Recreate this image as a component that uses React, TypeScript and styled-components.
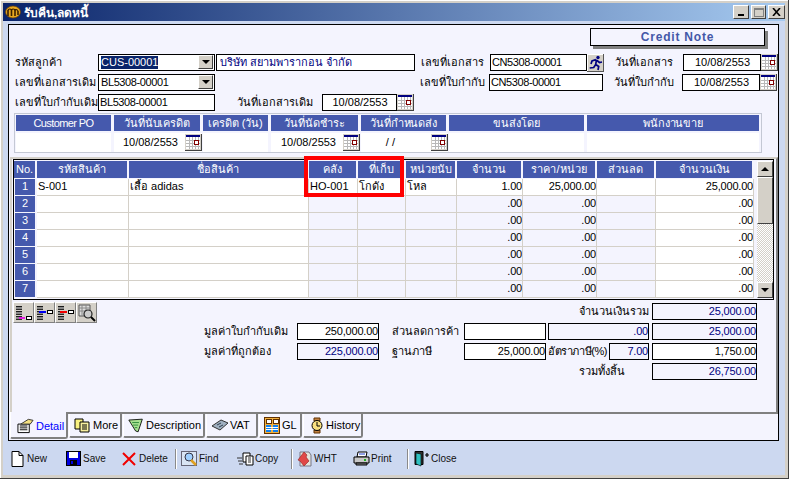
import React from "react";
import styled, { createGlobalStyle } from "styled-components";

const GlobalStyle = createGlobalStyle`
  html, body { margin: 0; padding: 0; background: #d4d0c8; }
  body { font-family: "Liberation Sans", "Noto Sans", sans-serif; font-size: 11px; color: #000; }
  * { box-sizing: border-box; }
`;

const Frame = styled.div`
  width: 789px;
  height: 479px;
  padding: 3px 3px 3px;
  background: #d4d0c8;
  border-right: 1px solid #404040;
  border-bottom: 1px solid #404040;
  box-shadow: inset 1px 1px 0 #fff;
  display: flex;
  flex-direction: column;
  overflow: hidden;
`;

const TitleBar = styled.div`
  height: 18px;
  flex: none;
  padding: 0 0 0 2px;
  display: flex;
  align-items: center;
  gap: 3px;
  color: #fff;
  font-weight: bold;
  font-size: 12px;
  background: linear-gradient(to right, #0a246a, #a6caf0);
`;

const TitleText = styled.span`
  flex: 1;
`;

const WinButton = styled.div<{ $w: number; $disabled?: boolean }>`
  width: ${(p) => p.$w}px;
  height: 14px;
  margin-left: -1px;
  flex: none;
  background: #d4d0c8;
  border: 1px solid;
  border-color: #fff #404040 #404040 #fff;
  display: flex;
  align-items: center;
  justify-content: center;
`;

const Client = styled.div`
  flex: 1;
  background: #ccd8f0;
  display: flex;
  flex-direction: column;
  padding: 3px 6px 0 5px;
  min-height: 0;
`;

const Panel = styled.div`
  height: 417px;
  flex: none;
  border: 1px solid #000;
  background: #f4f4fe;
  display: flex;
  flex-direction: column;
`;

const BadgeRow = styled.div`
  height: 29px;
  padding: 3px 13px 0 0;
  display: flex;
  justify-content: flex-end;
`;

const Badge = styled.div`
  width: 175px;
  height: 18px;
  background: #f4f4fe;
  border: 1px solid #000;
  box-shadow: 3px 3px 0 #808080;
  color: #4358a8;
  font-weight: bold;
  font-size: 12px;
  letter-spacing: 0.8px;
  text-align: center;
  line-height: 16px;
`;

const FormRow = styled.div`
  height: 17px;
  margin-bottom: 3px;
  padding-left: 6px;
  display: flex;
  align-items: stretch;
`;

const Label = styled.span<{ $w: number; $ml?: number; $tight?: boolean }>`
  width: ${(p) => p.$w}px;
  margin-left: ${(p) => p.$ml ?? 0}px;
  flex: none;
  line-height: 17px;
  white-space: nowrap;
  font-size: 11px;
  letter-spacing: ${(p) => (p.$tight ? "-0.4px" : "0")};
`;

const Box = styled.div<{
  $w: number;
  $ml?: number;
  $pl?: number;
  $right?: boolean;
  $center?: boolean;
  $tint?: boolean;
  $navy?: boolean;
  $tight?: boolean;
}>`
  width: ${(p) => p.$w}px;
  margin-left: ${(p) => p.$ml ?? 0}px;
  flex: none;
  height: 17px;
  border: 1px solid #000;
  background: ${(p) => (p.$tint ? "#f4f4fe" : "#fff")};
  color: ${(p) => (p.$navy ? "#000080" : "#000")};
  text-align: ${(p) => (p.$right ? "right" : p.$center ? "center" : "left")};
  letter-spacing: ${(p) => (p.$tight ? "-0.4px" : p.$right ? "-0.2px" : "0")};
  line-height: 15px;
  padding: 0 0 0 ${(p) => p.$pl ?? 1}px;
  white-space: nowrap;
  overflow: hidden;
`;

const Combo = styled(Box)`
  display: flex;
  justify-content: space-between;
  padding: 0 1px 0 2px;
`;

const Selected = styled.span`
  background: #0a246a;
  color: #fff;
  height: 13px;
  line-height: 13px;
  margin-top: 1px;
`;

const ComboArrow = styled.div`
  width: 15px;
  height: 14px;
  background: #d4d0c8;
  border: 1px solid;
  border-color: #fff #404040 #404040 #fff;
  display: flex;
  align-items: center;
  justify-content: center;
  &::after {
    content: "";
    border-left: 4px solid transparent;
    border-right: 4px solid transparent;
    border-top: 4px solid #000;
  }
`;

const CalWrap = styled.div`
  width: 17px;
  height: 17px;
  flex: none;
  display: flex;
`;

const Terms = styled.div`
  width: 748px;
  margin-left: 5px;
  margin-top: -1px;
  flex: none;
  border: 1px solid #c4c8d4;
  display: grid;
  grid-template-columns: 98px 89px 68px 90px 88px 138px 175px;
  grid-template-rows: 19px 19px;
`;

const TermHead = styled.div<{ $tight?: boolean }>`
  background: #4559ad;
  color: #fff;
  text-align: center;
  line-height: 16px;
  letter-spacing: ${(p) => (p.$tight ? "-0.6px" : "-0.1px")};
  margin: 1px 2px 2px 1px;
  white-space: nowrap;
  overflow: hidden;
`;

const TermCell = styled.div<{ $gap?: number; $cal?: boolean }>`
  background: #fff;
  border-right: ${(p) => (p.$cal ? "none" : "2px solid #f4f4fe")};
  display: flex;
  align-items: center;
  justify-content: flex-end;
  gap: ${(p) => p.$gap ?? 7}px;
  margin-left: 1px;
  line-height: 15px;
`;

const TabPage = styled.div`
  margin: 4px 0 0 1px;
  width: 768px;
  height: 257px;
  flex: none;
  border-top: 2px solid #d4d0c8;
  border-left: 2px solid #d4d0c8;
  border-right: 2px solid #808080;
  border-bottom: 2px solid #808080;
  position: relative;
  display: flex;
  flex-direction: column;
`;

const Sheet = styled.div`
  margin-left: 1px;
  width: 761px;
  height: 141px;
  flex: none;
  border: 1px solid #000;
  padding-top: 1px;
  display: flex;
`;

const Table = styled.div`
  width: 740px;
  flex: none;
  display: grid;
  grid-template-columns: 23px 92px 180px 49px 48px 51px 66px 74px 59px 98px;
  grid-template-rows: 18px repeat(7, 17px);
`;

const HeadCell = styled.div`
  background: #4559ad;
  color: #fff;
  text-align: center;
  line-height: 16px;
  margin: 0 2px 1px 0;
  white-space: nowrap;
  overflow: hidden;
`;

const NoCell = styled.div`
  background: #4559ad;
  color: #fff;
  text-align: center;
  line-height: 15px;
  margin: 0 2px 1px 1px;
`;

const Cell = styled.div<{ $white?: boolean; $right?: boolean }>`
  background: ${(p) => (p.$white ? "#fff" : "#f4f4fe")};
  border-right: 1px solid #d4d0c8;
  border-bottom: 1px solid #d4d0c8;
  text-align: ${(p) => (p.$right ? "right" : "left")};
  letter-spacing: ${(p) => (p.$right ? "-0.2px" : "0")};
  line-height: 15px;
  padding: 0 0 0 1px;
  white-space: nowrap;
  overflow: hidden;
`;

const Scroll = styled.div`
  width: 16px;
  margin-left: 3px;
  height: 137px;
  display: flex;
  flex-direction: column;
  background: repeating-conic-gradient(#d4d0c8 0 25%, #fff 0 50%) 0 0 / 2px 2px;
`;

const ScrollBtn = styled.div<{ $thumb?: boolean; $down?: boolean }>`
  height: ${(p) => (p.$thumb ? 47 : 16)}px;
  margin-top: ${(p) => (p.$down ? "auto" : 0)};
  background: #d4d0c8;
  border: 1px solid;
  border-color: #fff #404040 #404040 #fff;
  display: flex;
  align-items: center;
  justify-content: center;
`;

const Arrow = styled.span<{ $down?: boolean }>`
  border-left: 4px solid transparent;
  border-right: 4px solid transparent;
  border-${(p) => (p.$down ? "top" : "bottom")}: 4px solid #000;
`;

const LowerArea = styled.div`
  display: flex;
  margin-top: 2px;
  margin-left: 1px;
`;

const Tools = styled.div`
  display: flex;
  height: 21px;
`;

const ToolBtn = styled.div`
  width: 21px;
  height: 21px;
  background: #d4d0c8;
  border: 1px solid;
  border-color: #fff #808080 #808080 #fff;
  display: flex;
  align-items: center;
  justify-content: center;
`;

const Summary = styled.div`
  margin-left: 107px;
  margin-top: 1px;
  width: 553px;
  display: flex;
  flex-direction: column;
  gap: 3px;
`;

const SumRow = styled.div`
  display: flex;
  justify-content: flex-end;
  height: 17px;
`;

const TabStrip = styled.div`
  height: 26px;
  margin-left: 1px;
  display: flex;
  align-items: flex-start;
  gap: 1px;
`;

const Tab = styled.div<{ $w: number; $active?: boolean }>`
  width: ${(p) => p.$w}px;
  height: ${(p) => (p.$active ? 27 : 24)}px;
  margin-top: ${(p) => (p.$active ? -2 : 0)}px;
  position: relative;
  background: #f4f4fe;
  border-left: 1px solid #fff;
  border-right: 2px solid #808080;
  border-bottom: 2px solid #808080;
  border-bottom-left-radius: 2px;
  border-bottom-right-radius: 3px;
  color: ${(p) => (p.$active ? "#0000ff" : "#000")};
  font-size: 11px;
  display: flex;
  align-items: center;
  padding-left: 4px;
  padding-top: ${(p) => (p.$active ? 2 : 0)}px;
  white-space: nowrap;
`;

const IconSlot = styled.span<{ $w: number }>`
  width: ${(p) => p.$w}px;
  flex: none;
  display: flex;
  align-items: center;
`;

const ToolBar = styled.div`
  height: 35px;
  padding: 1px 0 0 3px;
  display: flex;
  align-items: center;
`;

const BarItem = styled.div<{ $w: number }>`
  width: ${(p) => p.$w}px;
  flex: none;
  display: flex;
  align-items: center;
  font-size: 10px;
  color: #111;
`;

const Sep = styled.div<{ $after: number }>`
  width: 2px;
  height: 20px;
  flex: none;
  margin-right: ${(p) => p.$after}px;
  background: #8a8a8a;
  border-right: 1px solid #fff;
`;

const RedMark = styled.div`
  position: absolute;
  left: 292px;
  top: -3px;
  width: 100px;
  height: 41px;
  border: 4px solid #f00;
  pointer-events: none;
`;

const Cal = () => (
  <CalWrap>
    <svg width="17" height="17" viewBox="0 0 17 17" shapeRendering="crispEdges">
      <rect width="17" height="17" fill="#d4d0c8" />
      <rect x="1" y="1" width="14" height="14" fill="#fff" />
      <rect x="1" y="1" width="14" height="2" fill="#000080" />
      <path d="M1 6h14M1 9h14M1 12h14M4 3v12M7 3v12M10 3v12M13 3v12" stroke="#b8b8b8" strokeWidth="1" />
      <rect x="9" y="6" width="4" height="4" fill="#fff" stroke="#800000" />
      <path d="M0 16.5h17M16.5 0v17" stroke="#404040" />
    </svg>
  </CalWrap>
);

const Runner = () => (
  <CalWrap>
    <svg width="17" height="18" viewBox="0 0 17 18">
      <rect width="17" height="18" fill="#d4d0c8" />
      <path d="M0 .5h17M.5 0v18" stroke="#fff" />
      <path d="M0 17.5h17M16.5 0v18" stroke="#555" />
      <circle cx="11" cy="3.5" r="1.7" fill="#000080" />
      <path d="M9 5.5l-4 1.5-1 3M9.5 5.5l-.8 5 3 2-.7 3.5M8.7 10.5l-2 3-4 .5M10 6.5l2.5 2 2.5-.5" stroke="#000080" strokeWidth="1.7" fill="none" />
    </svg>
  </CalWrap>
);

const TitleIcon = () => (
  <svg width="16" height="14" viewBox="0 0 16 14">
    <ellipse cx="8" cy="7" rx="7.5" ry="6" fill="#e8a820" stroke="#704000" strokeWidth=".7" />
    <path d="M3 11V5M6.500 11V4M10 11V4M13 10V6" stroke="#3a2000" strokeWidth="1.6" />
    <path d="M3 5Q5 3 6.500 5Q8 3 10 5Q12 4 13 6" fill="none" stroke="#3a2000" strokeWidth="1.2" />
  </svg>
);

const GridTool = ({ color, mode }: { color: string; mode: number }) => (
  <svg width="17" height="17" viewBox="0 0 17 17" shapeRendering="crispEdges">
    <path d="M1 2h6v3H1zM1 7h6v3H1zM1 12h6v3H1z" fill="#888" />
    <path d="M1 2h6M1 5h6M1 7h6M1 10h6M1 12h6M1 15h6" stroke="#000" strokeWidth=".8" />
    {mode === 0 ? (
      <path d="M11 12h5v3h-5z" fill="#fff" stroke="#000" />
    ) : (
      <path d="M11 6h5v3h-5z" fill="#fff" stroke="#000" />
    )}
    <path d={mode === 0 ? "M4 14h6" : "M3 8h7"} stroke={color} strokeWidth="1.5" />
  </svg>
);

const FindTool = () => (
  <svg width="18" height="18" viewBox="0 0 18 18">
    <path d="M1 1h11v11H1z" fill="#ddd" stroke="#555" />
    <path d="M1 4h11M1 7h11M4 1v11M8 1v11" stroke="#888" />
    <circle cx="10" cy="10" r="4" fill="#ccc" stroke="#222" strokeWidth="1.2" />
    <path d="M13 13l4 4" stroke="#000" strokeWidth="2" />
  </svg>
);

const TabIcon = ({ kind }: { kind: string }) => {
  if (kind === "Detail")
    return (
      <svg width="17" height="17" viewBox="0 0 18 17" style={{ marginLeft: 2 }}>
        <path d="M1 7h12v9H1z" fill="#fff" stroke="#000" />
        <path d="M3 9h8M3 11h8M3 13h8" stroke="#000" />
        <path d="M4 7l8-5 5 1-3 4z" fill="#f4e080" stroke="#333" />
      </svg>
    );
  if (kind === "More")
    return (
      <svg width="16" height="15" viewBox="0 0 16 15">
        <path d="M1 1h8v10H1z" fill="#f8f080" stroke="#000" />
        <path d="M6 4h9v10H6z" fill="#f8f0a0" stroke="#000" />
        <path d="M8 7h5M8 9h5M8 11h5" stroke="#000" />
      </svg>
    );
  if (kind === "Description")
    return (
      <svg width="16" height="15" viewBox="0 0 19 17">
        <path d="M1 2l16-1-5 15-3-1z" fill="#a8e090" stroke="#000" />
        <path d="M5 5h8M6 8h6M8 11h3" stroke="#208030" />
      </svg>
    );
  if (kind === "VAT")
    return (
      <svg width="18" height="14" viewBox="0 0 18 14">
        <path d="M1 8l9-6 7 3-8 7z" fill="#a0b0c0" stroke="#333" />
        <path d="M6 7l4-2M8 9l4-2" stroke="#304050" />
      </svg>
    );
  if (kind === "GL")
    return (
      <svg width="16" height="17" viewBox="0 0 16 17" shapeRendering="crispEdges">
        <rect x=".5" y=".5" width="15" height="16" fill="#f0b040" stroke="#603000" />
        <path d="M2 2h5v4H2zM9 2h5v4H9z" fill="#fff" stroke="#603000" />
        <path d="M2 8h5v7H2zM9 8h5v7H9z" fill="#1080f0" />
        <path d="M2 10.500h12M2 12.500h12" stroke="#fff" />
      </svg>
    );
  return (
    <svg width="14" height="17" viewBox="0 0 14 17" style={{ marginLeft: 2 }}>
      <path d="M4 1h6v3H4zM4 13h6v3H4z" fill="#c08040" stroke="#603000" />
      <circle cx="7" cy="8.500" r="5" fill="#f8e080" stroke="#000" />
      <path d="M7 5v4h3" stroke="#000" fill="none" />
    </svg>
  );
};

const BarIcon = ({ kind }: { kind: string }) => {
  switch (kind) {
    case "New":
      return (
        <svg width="13" height="16" viewBox="0 0 13 16">
          <path d="M1 .5h7l4 4v11H1z" fill="#fff" stroke="#000" />
          <path d="M8 .5v4h4" fill="none" stroke="#000" />
        </svg>
      );
    case "Save":
      return (
        <svg width="15" height="15" viewBox="0 0 15 15" shapeRendering="crispEdges">
          <rect width="15" height="15" fill="#000" />
          <rect x="1" y="1" width="13" height="13" fill="#0000e0" />
          <rect x="3" y="1" width="9" height="6" fill="#fff" />
          <rect x="4" y="9" width="7" height="5" fill="#000" />
          <rect x="5" y="10" width="2" height="3" fill="#0000e0" />
        </svg>
      );
    case "Delete":
      return (
        <svg width="14" height="14" viewBox="0 0 14 14">
          <path d="M1 1l12 12M13 1L1 13" stroke="#f00000" strokeWidth="2" />
        </svg>
      );
    case "Find":
      return (
        <svg width="17" height="16" viewBox="0 0 17 16">
          <rect x=".5" y=".5" width="15" height="14" fill="#d8e4f4" stroke="#667" />
          <circle cx="8" cy="6" r="4" fill="#a0d0ff" stroke="#334" />
          <path d="M10 9l5 5" stroke="#e0a020" strokeWidth="2.5" />
        </svg>
      );
    case "Copy":
      return (
        <svg width="17" height="14" viewBox="0 0 17 14">
          <path d="M6 1h7v9H6z" fill="#fff" stroke="#000" />
          <path d="M9 4h7v9H9z" fill="#fff" stroke="#000" />
          <path d="M11 6h3M11 8h3M11 10h3M0 6h5M1 9h4M2 12h4" stroke="#333" />
        </svg>
      );
    case "WHT":
      return (
        <svg width="15" height="17" viewBox="0 0 15 17">
          <path d="M3 2h9l2 3v11H3z" fill="#e4e4dc" stroke="#778" />
          <path d="M1 10l6-8 3 3-1 2 3 4-5 5-4-5z" fill="#e04848" stroke="#902020" strokeWidth=".6" />
        </svg>
      );
    case "Print":
      return (
        <svg width="17" height="15" viewBox="0 0 17 15">
          <path d="M5 1h9l-1 5H4z" fill="#fff" stroke="#000" />
          <path d="M6 3h6" stroke="#2040d0" />
          <path d="M1 6h15v6H1z" fill="#c8c8c8" stroke="#000" />
          <path d="M3 12h11v2H3z" fill="#888" stroke="#000" />
          <rect x="11" y="8" width="2" height="2" fill="#20b020" />
        </svg>
      );
    default:
      return (
        <svg width="16" height="16" viewBox="0 0 16 16">
          <path d="M1 .5h8v13H1z" fill="#303030" stroke="#000" />
          <path d="M2 2l5 1v12l-5-2z" fill="#30c0c0" stroke="#000" strokeWidth=".6" />
          <path d="M11 4h4M13 2v4" stroke="#000" strokeWidth="1.2" />
        </svg>
      );
  }
};

const heads = ["No.", "รหัสสินค้า", "ชื่อสินค้า", "คลัง", "ที่เก็บ", "หน่วยนับ", "จำนวน", "ราคา/หน่วย", "ส่วนลด", "จำนวนเงิน"];
const rowNos = [1, 2, 3, 4, 5, 6, 7];

const tabs = [
  { name: "Detail", w: 58, slot: 21 },
  { name: "More", w: 53, slot: 19 },
  { name: "Description", w: 82, slot: 18 },
  { name: "VAT", w: 52, slot: 19 },
  { name: "GL", w: 43, slot: 18 },
  { name: "History", w: 60, slot: 18 },
];

export default function App() {
  return (
    <>
      <GlobalStyle />
      <Frame>
        <TitleBar>
          <TitleIcon />
          <TitleText>รับคืน,ลดหนี้</TitleText>
          <WinButton $w={16}>
            <svg width="8" height="8" viewBox="0 0 8 8" shapeRendering="crispEdges">
              <rect x="1" y="6" width="6" height="2" fill="#000" />
            </svg>
          </WinButton>
          <WinButton $w={15} $disabled>
            <svg width="10" height="9" viewBox="0 0 10 9" shapeRendering="crispEdges">
              <path d="M.5.500h9v8h-9z M0 1.500h10" fill="none" stroke="#808080" />
            </svg>
          </WinButton>
          <WinButton $w={17}>
            <svg width="9" height="8" viewBox="0 0 9 8">
              <path d="M1 0l7 8M8 0L1 8" stroke="#000" strokeWidth="1.6" />
            </svg>
          </WinButton>
        </TitleBar>
        <Client>
          <Panel>
            <BadgeRow>
              <Badge>Credit Note</Badge>
            </BadgeRow>
            <FormRow>
              <Label $w={83}>รหัสลูกค้า</Label>
              <Combo $w={117}>
                <Selected>CUS-00001</Selected>
                <ComboArrow />
              </Combo>
              <Box $w={199} $ml={1} $pl={3} $navy>บริษัท สยามพารากอน จำกัด</Box>
              <Label $w={69} $ml={6}>เลขที่เอกสาร</Label>
              <Box $w={97} $tight>CN5308-00001</Box>
              <Runner />
              <Label $w={68} $ml={11}>วันที่เอกสาร</Label>
              <Box $w={78} $center>10/08/2553</Box>
              <Cal />
            </FormRow>
            <FormRow>
              <Label $w={83}>เลขที่เอกสารเดิม</Label>
              <Combo $w={117} $tight>
                <span>BL5308-00001</span>
                <ComboArrow />
              </Combo>
              <Label $w={69} $ml={205}>เลขที่ใบกำกับ</Label>
              <Box $w={114} $tight>CN5308-00001</Box>
              <Label $w={68} $ml={11}>วันที่ใบกำกับ</Label>
              <Box $w={78} $center>10/08/2553</Box>
              <Cal />
            </FormRow>
            <FormRow>
              <Label $w={83}>เลขที่ใบกำกับเดิม</Label>
              <Box $w={117} $tight>BL5308-00001</Box>
              <Label $w={85} $ml={22}>วันที่เอกสารเดิม</Label>
              <Box $w={75} $center>10/08/2553</Box>
              <Cal />
            </FormRow>
            <Terms>
              <TermHead $tight>Customer PO</TermHead>
              <TermHead>วันที่นับเครดิต</TermHead>
              <TermHead>เครดิต (วัน)</TermHead>
              <TermHead>วันที่นัดชำระ</TermHead>
              <TermHead>วันที่กำหนดส่ง</TermHead>
              <TermHead>ขนส่งโดย</TermHead>
              <TermHead>พนักงานขาย</TermHead>
              <TermCell />
              <TermCell $cal>
                10/08/2553
                <Cal />
              </TermCell>
              <TermCell />
              <TermCell $cal>
                10/08/2553
                <Cal />
              </TermCell>
              <TermCell $cal $gap={36}>
                / /
                <Cal />
              </TermCell>
              <TermCell />
              <TermCell />
            </Terms>
            <TabPage>
              <RedMark />
              <Sheet>
                <Table>
                  {heads.map((h) => (
                    <HeadCell key={h}>{h}</HeadCell>
                  ))}
                  {rowNos.map((n) => {
                    const first = n === 1;
                    return (
                      <React.Fragment key={n}>
                        <NoCell>{n}</NoCell>
                        <Cell $white>{first ? "S-001" : ""}</Cell>
                        <Cell $white>{first ? "เสื้อ adidas" : ""}</Cell>
                        <Cell $white={first}>{first ? "HO-001" : ""}</Cell>
                        <Cell $white={first}>{first ? "โกดัง" : ""}</Cell>
                        <Cell $white={first}>{first ? "โหล" : ""}</Cell>
                        <Cell $white={first} $right>{first ? "1.00" : ".00"}</Cell>
                        <Cell $white={first} $right>{first ? "25,000.00" : ".00"}</Cell>
                        <Cell $white={first} />
                        <Cell $white $right>{first ? "25,000.00" : ".00"}</Cell>
                      </React.Fragment>
                    );
                  })}
                </Table>
                <Scroll>
                  <ScrollBtn>
                    <Arrow />
                  </ScrollBtn>
                  <ScrollBtn $thumb />
                  <ScrollBtn $down>
                    <Arrow $down />
                  </ScrollBtn>
                </Scroll>
              </Sheet>
              <LowerArea>
                <Tools>
                  <ToolBtn><GridTool color="#e020e0" mode={0} /></ToolBtn>
                  <ToolBtn><GridTool color="#0000f0" mode={1} /></ToolBtn>
                  <ToolBtn><GridTool color="#f00000" mode={2} /></ToolBtn>
                  <ToolBtn><FindTool /></ToolBtn>
                </Tools>
                <Summary>
                  <SumRow>
                    <Label $w={73}>จำนวนเงินรวม</Label>
                    <Box $w={105} $right $tint $navy>25,000.00</Box>
                  </SumRow>
                  <SumRow>
                    <Label $w={93}>มูลค่าใบกำกับเดิม</Label>
                    <Box $w={82} $right>250,000.00</Box>
                    <Label $w={72} $ml={13}>ส่วนลดการค้า</Label>
                    <Box $w={82} />
                    <Box $w={101} $ml={2} $right $tint $navy>.00</Box>
                    <Box $w={105} $ml={3} $right $tint $navy>25,000.00</Box>
                  </SumRow>
                  <SumRow>
                    <Label $w={93}>มูลค่าที่ถูกต้อง</Label>
                    <Box $w={82} $right $tint $navy>225,000.00</Box>
                    <Label $w={72} $ml={13}>ฐานภาษี</Label>
                    <Box $w={82} $right>25,000.00</Box>
                    <Label $w={61} $ml={2} $tight>อัตราภาษี(%)</Label>
                    <Box $w={40} $right $tint $navy>7.00</Box>
                    <Box $w={105} $ml={3} $right>1,750.00</Box>
                  </SumRow>
                  <SumRow>
                    <Label $w={73}>รวมทั้งสิ้น</Label>
                    <Box $w={105} $right $tint $navy>26,750.00</Box>
                  </SumRow>
                </Summary>
              </LowerArea>
            </TabPage>
            <TabStrip>
              {tabs.map((t, i) => (
                <Tab key={t.name} $w={t.w} $active={i === 0}>
                  <IconSlot $w={t.slot}>
                    <TabIcon kind={t.name} />
                  </IconSlot>
                  {t.name}
                </Tab>
              ))}
            </TabStrip>
          </Panel>
          <ToolBar>
            <BarItem $w={55}><IconSlot $w={16}><BarIcon kind="New" /></IconSlot>New</BarItem>
            <BarItem $w={56}><IconSlot $w={17}><BarIcon kind="Save" /></IconSlot>Save</BarItem>
            <BarItem $w={53}><IconSlot $w={17}><BarIcon kind="Delete" /></IconSlot>Delete</BarItem>
            <Sep $after={4} />
            <BarItem $w={56}><IconSlot $w={18}><BarIcon kind="Find" /></IconSlot>Find</BarItem>
            <BarItem $w={54}><IconSlot $w={18}><BarIcon kind="Copy" /></IconSlot>Copy</BarItem>
            <Sep $after={4} />
            <BarItem $w={56}><IconSlot $w={17}><BarIcon kind="WHT" /></IconSlot>WHT</BarItem>
            <BarItem $w={54}><IconSlot $w={18}><BarIcon kind="Print" /></IconSlot>Print</BarItem>
            <Sep $after={5} />
            <BarItem $w={55}><IconSlot $w={17}><BarIcon kind="Close" /></IconSlot>Close</BarItem>
          </ToolBar>
        </Client>
      </Frame>
    </>
  );
}
